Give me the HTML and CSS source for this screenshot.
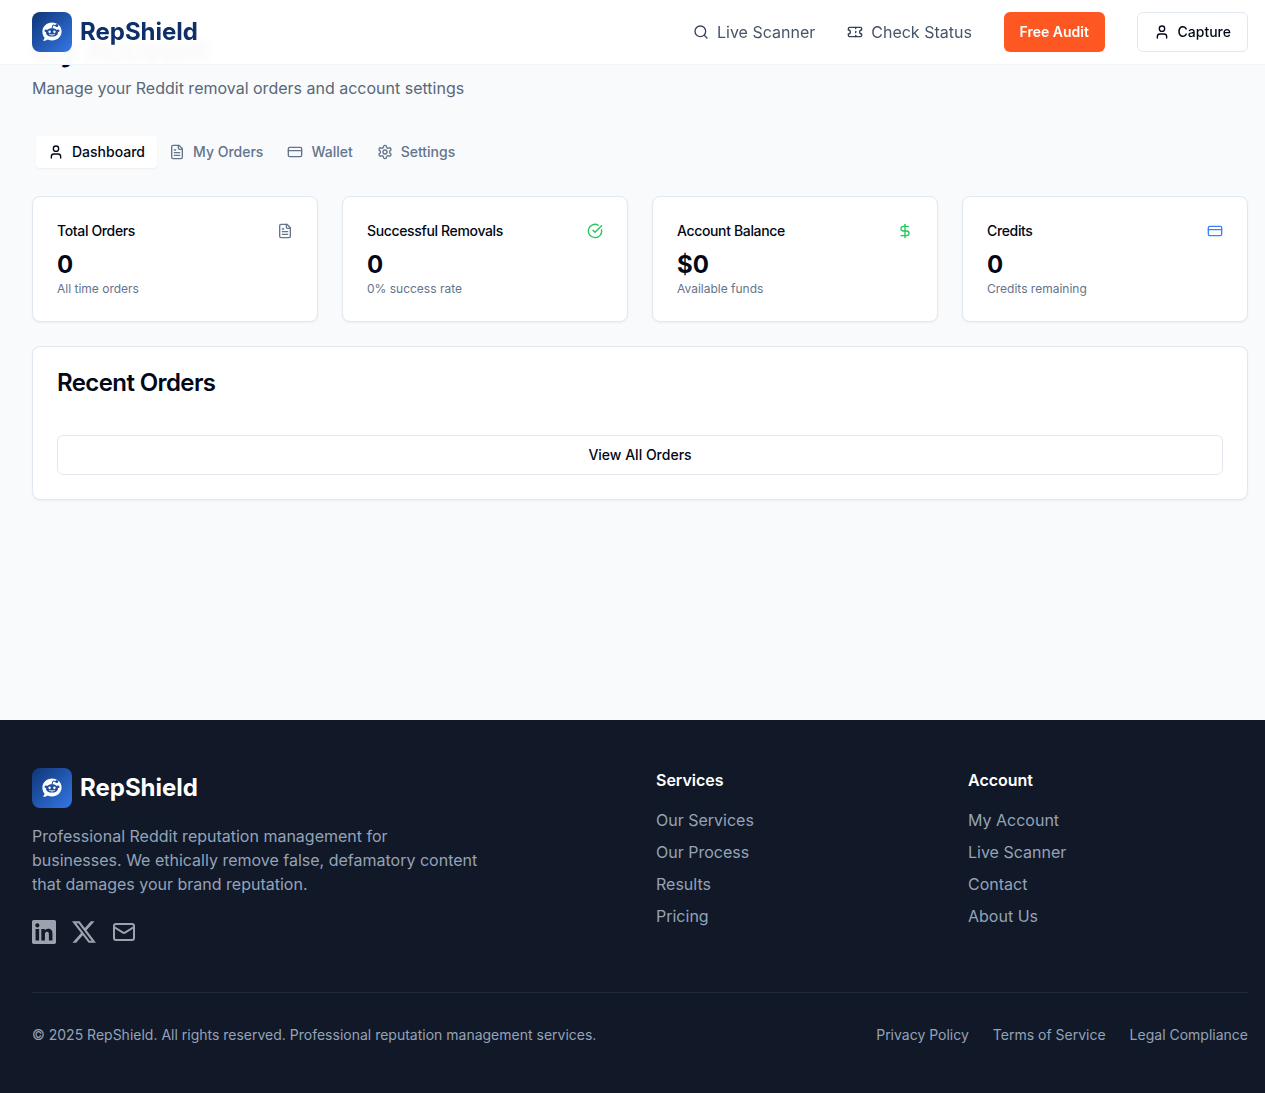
FILE: index.html
```html
<!DOCTYPE html>
<html lang="en">
<head>
    <meta charset="UTF-8">
    <meta name="viewport" content="width=device-width, initial-scale=1.0">
    <title>My Account - RepShield</title>
    <link rel="stylesheet" href="styles.css">
</head>

<body>
    <header class="site-header">
        <a class="brand" href="#">
            <span class="brand-mark">
                <svg viewBox="0 0 24 24" class="reddit-icon">
                    <path class="bubble" d="M12 2.6c-5.2 0-9.6 4-9.6 9.2 0 2.3.8 4.3 2.2 5.9-.2 1.1-.8 2.2-1.7 3 1.9.1 3.6-.4 4.9-1.3 1.3.6 2.7 1 4.2 1 5.2 0 9.6-3.9 9.6-9S17.200 2.600 12 2.600Z"/>
                    <path class="face" d="M12 8.200c-3.300 0-6 1.800-6 4.200s2.700 4.200 6 4.200 6-1.800 6-4.200-2.700-4.200-6-4.200Z"/>
                    <circle class="face" cx="5.800" cy="10.800" r="1.300"/>
                    <circle class="face" cx="18.200" cy="10.800" r="1.300"/>
                    <path class="antenna" d="M12 8.500l1-3.500 3 .7"/>
                    <circle class="face" cx="16.800" cy="5.400" r="1.500"/>
                    <circle class="bubble" cx="9.600" cy="11.800" r="1.200"/>
                    <circle class="bubble" cx="14.400" cy="11.800" r="1.200"/>
                    <path class="smile" d="M9.500 14.300c1.500 1 3.500 1 5 0"/>
                </svg>
            </span>
            <span class="brand-name">RepShield</span>
        </a>
        <nav class="top-nav">
            <a href="#" class="nav-link">
                <svg viewBox="0 0 24 24" class="icon"><circle cx="11" cy="11" r="8"/><path d="m21 21-4.300-4.300"/></svg>
                Live Scanner
            </a>
            <a href="#" class="nav-link">
                <svg viewBox="0 0 24 24" class="icon"><path d="M2 9a3 3 0 0 1 0 6v2a2 2 0 0 0 2 2h16a2 2 0 0 0 2-2v-2a3 3 0 0 1 0-6V7a2 2 0 0 0-2-2H4a2 2 0 0 0-2 2Z"/><path d="M13 5v2"/><path d="M13 17v2"/><path d="M13 11v2"/></svg>
                Check Status
            </a>
            <a href="#" class="btn-audit">Free Audit</a>
            <a href="#" class="btn-capture">
                <svg viewBox="0 0 24 24" class="icon"><path d="M19 21v-2a4 4 0 0 0-4-4H9a4 4 0 0 0-4 4v2"/><circle cx="12" cy="7" r="4"/></svg>
                Capture
            </a>
        </nav>
    </header>

    <main class="account">
        <h1>My Account</h1>
        <p class="lead">Manage your Reddit removal orders and account settings</p>

        <div class="tabs">
            <a href="#" class="tab active">
                <svg viewBox="0 0 24 24" class="icon"><path d="M19 21v-2a4 4 0 0 0-4-4H9a4 4 0 0 0-4 4v2"/><circle cx="12" cy="7" r="4"/></svg>
                Dashboard
            </a>
            <a href="#" class="tab">
                <svg viewBox="0 0 24 24" class="icon"><path d="M15 2H6a2 2 0 0 0-2 2v16a2 2 0 0 0 2 2h12a2 2 0 0 0 2-2V7Z"/><path d="M14 2v4a2 2 0 0 0 2 2h4"/><path d="M10 9H8"/><path d="M16 13H8"/><path d="M16 17H8"/></svg>
                My Orders
            </a>
            <a href="#" class="tab">
                <svg viewBox="0 0 24 24" class="icon"><rect width="20" height="14" x="2" y="5" rx="2"/><line x1="2" x2="22" y1="10" y2="10"/></svg>
                Wallet
            </a>
            <a href="#" class="tab">
                <svg viewBox="0 0 24 24" class="icon"><path d="M12.220 2h-.44a2 2 0 0 0-2 2v.18a2 2 0 0 1-1 1.730l-.43.25a2 2 0 0 1-2 0l-.15-.08a2 2 0 0 0-2.730.73l-.22.38a2 2 0 0 0 .73 2.730l.15.1a2 2 0 0 1 1 1.720v.51a2 2 0 0 1-1 1.740l-.15.09a2 2 0 0 0-.73 2.730l.22.38a2 2 0 0 0 2.730.73l.15-.08a2 2 0 0 1 2 0l.43.25a2 2 0 0 1 1 1.730V20a2 2 0 0 0 2 2h.44a2 2 0 0 0 2-2v-.18a2 2 0 0 1 1-1.730l.43-.25a2 2 0 0 1 2 0l.15.08a2 2 0 0 0 2.730-.73l.22-.39a2 2 0 0 0-.73-2.730l-.15-.08a2 2 0 0 1-1-1.740v-.5a2 2 0 0 1 1-1.740l.15-.09a2 2 0 0 0 .73-2.730l-.22-.38a2 2 0 0 0-2.730-.73l-.15.08a2 2 0 0 1-2 0l-.43-.25a2 2 0 0 1-1-1.730V4a2 2 0 0 0-2-2z"/><circle cx="12" cy="12" r="3"/></svg>
                Settings
            </a>
        </div>

        <section class="stats">
            <div class="card stat">
                <div class="stat-head">
                    <span>Total Orders</span>
                    <svg viewBox="0 0 24 24" class="icon grey"><path d="M15 2H6a2 2 0 0 0-2 2v16a2 2 0 0 0 2 2h12a2 2 0 0 0 2-2V7Z"/><path d="M14 2v4a2 2 0 0 0 2 2h4"/><path d="M10 9H8"/><path d="M16 13H8"/><path d="M16 17H8"/></svg>
                </div>
                <div class="stat-value">0</div>
                <div class="stat-note">All time orders</div>
            </div>
            <div class="card stat">
                <div class="stat-head">
                    <span>Successful Removals</span>
                    <svg viewBox="0 0 24 24" class="icon green"><path d="M21.801 10A10 10 0 1 1 17 3.335"/><path d="m9 11 3 3L22 4"/></svg>
                </div>
                <div class="stat-value">0</div>
                <div class="stat-note">0% success rate</div>
            </div>
            <div class="card stat">
                <div class="stat-head">
                    <span>Account Balance</span>
                    <svg viewBox="0 0 24 24" class="icon green"><line x1="12" x2="12" y1="2" y2="22"/><path d="M17 5H9.500a3.500 3.500 0 0 0 0 7h5a3.500 3.500 0 0 1 0 7H6"/></svg>
                </div>
                <div class="stat-value">$0</div>
                <div class="stat-note">Available funds</div>
            </div>
            <div class="card stat">
                <div class="stat-head">
                    <span>Credits</span>
                    <svg viewBox="0 0 24 24" class="icon blue"><rect width="20" height="14" x="2" y="5" rx="2"/><line x1="2" x2="22" y1="10" y2="10"/></svg>
                </div>
                <div class="stat-value">0</div>
                <div class="stat-note">Credits remaining</div>
            </div>
        </section>

        <section class="card recent">
            <h2>Recent Orders</h2>
            <a href="#" class="btn-all">View All Orders</a>
        </section>
    </main>

    <footer class="site-footer">
        <div class="footer-grid">
            <div class="footer-about">
                <a class="brand" href="#">
                    <span class="brand-mark">
                        <svg viewBox="0 0 24 24" class="reddit-icon">
                            <path class="bubble" d="M12 2.6c-5.2 0-9.6 4-9.6 9.2 0 2.3.8 4.3 2.2 5.9-.2 1.1-.8 2.2-1.7 3 1.9.1 3.6-.4 4.9-1.3 1.3.6 2.7 1 4.2 1 5.2 0 9.6-3.9 9.6-9S17.200 2.600 12 2.600Z"/>
                            <path class="face" d="M12 8.200c-3.300 0-6 1.800-6 4.200s2.700 4.200 6 4.200 6-1.800 6-4.200-2.700-4.200-6-4.200Z"/>
                            <circle class="face" cx="5.800" cy="10.800" r="1.300"/>
                            <circle class="face" cx="18.200" cy="10.800" r="1.300"/>
                            <path class="antenna" d="M12 8.500l1-3.500 3 .7"/>
                            <circle class="face" cx="16.800" cy="5.400" r="1.500"/>
                            <circle class="bubble" cx="9.600" cy="11.800" r="1.200"/>
                            <circle class="bubble" cx="14.400" cy="11.800" r="1.200"/>
                            <path class="smile" d="M9.500 14.300c1.500 1 3.500 1 5 0"/>
                        </svg>
                    </span>
                    <span class="brand-name">RepShield</span>
                </a>
                <p>Professional Reddit reputation management for businesses. We ethically remove false, defamatory content that damages your brand reputation.</p>
                <div class="social">
                    <a href="#"><svg viewBox="0 0 24 24" class="solid"><path d="M20.447 20.452h-3.554v-5.569c0-1.328-.027-3.037-1.852-3.037-1.853 0-2.136 1.445-2.136 2.939v5.667H9.351V9h3.414v1.561h.046c.477-.9 1.637-1.850 3.370-1.850 3.601 0 4.267 2.370 4.267 5.455v6.286zM5.337 7.433c-1.144 0-2.063-.926-2.063-2.065 0-1.138.92-2.063 2.063-2.063 1.140 0 2.064.925 2.064 2.063 0 1.139-.925 2.065-2.064 2.065zm1.782 13.019H3.555V9h3.564v11.452zM22.225 0H1.771C.792 0 0 .774 0 1.729v20.542C0 23.227.792 24 1.771 24h20.451C23.200 24 24 23.227 24 22.271V1.729C24 .774 23.200 0 22.222 0h.003z"/></svg></a>
                    <a href="#"><svg viewBox="1.25 1.75 21.6 20.5" class="solid"><path d="M18.244 2.250h3.308l-7.227 8.260 8.502 11.240H16.170l-5.214-6.817L4.990 21.750H1.680l7.730-8.835L1.254 2.250H8.080l4.713 6.231zm-1.161 17.520h1.833L7.084 4.126H5.117z"/></svg></a>
                    <a href="#"><svg viewBox="0 0 24 24" class="line"><rect width="20" height="16" x="2" y="4" rx="2"/><path d="m22 7-8.970 5.700a1.940 1.940 0 0 1-2.060 0L2 7"/></svg></a>
                </div>
            </div>
            <div class="footer-col">
                <h3>Services</h3>
                <ul>
                    <li><a href="#">Our Services</a></li>
                    <li><a href="#">Our Process</a></li>
                    <li><a href="#">Results</a></li>
                    <li><a href="#">Pricing</a></li>
                </ul>
            </div>
            <div class="footer-col">
                <h3>Account</h3>
                <ul>
                    <li><a href="#">My Account</a></li>
                    <li><a href="#">Live Scanner</a></li>
                    <li><a href="#">Contact</a></li>
                    <li><a href="#">About Us</a></li>
                </ul>
            </div>
        </div>
        <div class="footer-bottom">
            <span>© 2025 RepShield. All rights reserved. Professional reputation management services.</span>
            <div class="legal">
                <a href="#">Privacy Policy</a>
                <a href="#">Terms of Service</a>
                <a href="#">Legal Compliance</a>
            </div>
        </div>
    </footer>
</body>

</html>
```

FILE: styles.css
```css
* {
    box-sizing: border-box;
}

body {
    margin: 0;
    min-height: 100vh;
    display: flex;
    flex-direction: column;
    background: #f8fafc;
    font-family: 'Inter', 'Liberation Sans', sans-serif;
    color: #020817;
}

a {
    color: inherit;
    text-decoration: none;
}

.icon {
    width: 16px;
    height: 16px;
    flex: none;
    fill: none;
    stroke: currentColor;
    stroke-width: 2;
    stroke-linecap: round;
    stroke-linejoin: round;
}

.icon.grey { color: #64748b; }
.icon.green { color: #22c55e; }
.icon.blue { color: #3b82f6; }

/* header */
.site-header {
    position: sticky;
    top: 0;
    z-index: 10;
    height: 65px;
    padding: 0 17px 0 32px;
    display: flex;
    align-items: center;
    justify-content: space-between;
    background: rgba(255, 255, 255, 0.97);
    backdrop-filter: blur(4px);
    border-bottom: 1px solid #f1f5f9;
}

.brand {
    display: flex;
    align-items: center;
    gap: 8px;
}

.brand-mark {
    width: 40px;
    height: 40px;
    border-radius: 8px;
    display: flex;
    align-items: center;
    justify-content: center;
    background: linear-gradient(135deg, #0f3576 0%, #3378e6 100%);
}

.reddit-icon {
    width: 24px;
    height: 24px;
}

.reddit-icon .bubble { fill: #fff; }
.reddit-icon .face { fill: #1d4e9e; }
.reddit-icon .antenna { fill: none; stroke: #1d4e9e; stroke-width: 1; }
.reddit-icon .smile { fill: none; stroke: #fff; stroke-width: 1; stroke-linecap: round; }

.brand-name {
    font-size: 24px;
    line-height: 32px;
    font-weight: 700;
    color: #0f2f6b;
}

.top-nav {
    display: flex;
    align-items: center;
    gap: 32px;
}

.nav-link {
    display: flex;
    align-items: center;
    gap: 8px;
    font-size: 16px;
    line-height: 24px;
    color: #475569;
}

.nav-link .icon {
    color: #334155;
}

.btn-audit {
    height: 40px;
    padding: 0 15.7px;
    display: flex;
    align-items: center;
    border-radius: 6px;
    background: #ff5722;
    color: #fff;
    font-size: 14px;
    line-height: 20px;
    font-weight: 600;
}

.btn-capture {
    height: 40px;
    padding: 0 16px;
    display: flex;
    align-items: center;
    gap: 8px;
    border: 1px solid #e2e8f0;
    border-radius: 6px;
    background: #fff;
    font-size: 14px;
    line-height: 20px;
    font-weight: 500;
}

/* main, the title slides under the sticky header */
.account {
    flex: 1;
    margin-top: -33px;
    padding: 0 17px 0 32px;
}

h1 {
    margin: 0 0 8px;
    font-size: 30px;
    line-height: 36px;
    font-weight: 700;
}

.lead {
    margin: 0 0 32px;
    font-size: 16px;
    line-height: 24px;
    color: #5a6778;
}

.tabs {
    height: 40px;
    padding: 4px;
    margin-bottom: 24px;
    display: flex;
    align-items: center;
}

.tab {
    height: 32px;
    padding: 0 12px;
    display: flex;
    align-items: center;
    gap: 8px;
    border-radius: 4px;
    font-size: 14px;
    line-height: 20px;
    font-weight: 500;
    color: #64748b;
}

.tab.active {
    background: #fff;
    color: #020817;
    box-shadow: 0 1px 2px rgba(0, 0, 0, 0.05);
}

.card {
    background: #fff;
    border: 1px solid #e2e8f0;
    border-radius: 8px;
    box-shadow: 0 1px 2px rgba(0, 0, 0, 0.05);
}

.stats {
    display: grid;
    grid-template-columns: repeat(4, 1fr);
    gap: 24px;
    margin-bottom: 24px;
}

.stat {
    padding: 24px;
}

.stat-head {
    display: flex;
    align-items: center;
    justify-content: space-between;
    margin-bottom: 8px;
    font-size: 14px;
    line-height: 20px;
    font-weight: 500;
    letter-spacing: -0.35px;
}

.stat-value {
    font-size: 24px;
    line-height: 32px;
    font-weight: 700;
}

.stat-note {
    font-size: 12px;
    line-height: 16px;
    color: #64748b;
}

.recent {
    padding: 24px;
}

.recent h2 {
    margin: 0 0 40px;
    font-size: 24px;
    line-height: 24px;
    font-weight: 600;
    letter-spacing: -0.6px;
}

.btn-all {
    height: 40px;
    display: flex;
    align-items: center;
    justify-content: center;
    border: 1px solid #e2e8f0;
    border-radius: 6px;
    background: #fff;
    font-size: 14px;
    line-height: 20px;
    font-weight: 500;
}

/* footer */
.site-footer {
    padding: 48px 17px 48px 32px;
    background: #111827;
    color: #94a3b8;
}

.footer-grid {
    display: grid;
    grid-template-columns: repeat(4, 1fr);
    gap: 32px;
    padding-bottom: 48px;
    border-bottom: 1px solid #1e293b;
}

.footer-about {
    grid-column: span 2;
}

.footer-about .brand-name {
    color: #fff;
}

.footer-about p {
    max-width: 448px;
    margin: 16px 0 24px;
    font-size: 16px;
    line-height: 24px;
}

.social {
    display: flex;
    gap: 16px;
}

.social a {
    display: block;
    width: 24px;
    height: 24px;
}

.social svg {
    display: block;
    width: 24px;
    height: 24px;
}

.social .solid { fill: #9ca3af; }

.social .line {
    fill: none;
    stroke: #9ca3af;
    stroke-width: 2;
    stroke-linecap: round;
    stroke-linejoin: round;
}

.footer-col h3 {
    margin: 0 0 16px;
    font-size: 16px;
    line-height: 24px;
    font-weight: 600;
    color: #fff;
}

.footer-col ul {
    margin: 0;
    padding: 0;
    list-style: none;
    display: flex;
    flex-direction: column;
    gap: 8px;
    font-size: 16px;
    line-height: 24px;
}

.footer-bottom {
    padding-top: 32px;
    display: flex;
    align-items: center;
    justify-content: space-between;
    font-size: 14px;
    line-height: 20px;
}

.legal {
    display: flex;
    gap: 24px;
}
```
